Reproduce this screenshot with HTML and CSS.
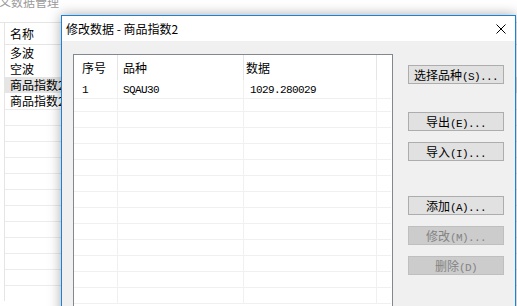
FILE: index.html
```html
<!doctype html>
<html lang="zh-CN">
  <head>
    <meta charset="UTF-8" />
    <title>修改数据 - 商品指数2</title>
    <link rel="stylesheet" href="styles.css">
  </head>
  <body>
    <div class="app">
      <div class="app-title"><span>义数据管理</span></div>
      <div class="app-list">
        <div class="app-head">名称</div>
        <div class="app-row">多波</div>
        <div class="app-row">空波</div>
        <div class="app-row selected">商品指数2</div>
        <div class="app-row">商品指数2</div>
        <div class="app-row empty"></div>
        <div class="app-row empty"></div>
        <div class="app-row empty"></div>
        <div class="app-row empty"></div>
        <div class="app-row empty"></div>
        <div class="app-row empty"></div>
        <div class="app-row empty"></div>
        <div class="app-row empty"></div>
        <div class="app-row empty"></div>
        <div class="app-row empty"></div>
        <div class="app-row empty"></div>
        <div class="app-row empty"></div>
      </div>
    </div>

    <div class="dialog">
      <div class="dialog-title">
        <span>修改数据 - 商品指数2</span>
        <svg class="close" width="10" height="10" viewBox="0 0 10 10">
          <path d="M0.5 0.5 L9.5 9.5 M9.5 0.5 L0.5 9.5" stroke="#000" stroke-width="1" fill="none" />
        </svg>
      </div>
      <div class="dialog-body">
        <div class="list">
          <div class="list-head">
            <div class="cell c1">序号</div>
            <div class="cell c2">品种</div>
            <div class="cell c3">数据</div>
            <div class="cell c4"></div>
          </div>
          <div class="list-row">
            <div class="cell c1"><span class="a">1</span></div>
            <div class="cell c2"><span class="a">SQAU30</span></div>
            <div class="cell c3 num"><span class="a">1029.280029</span></div>
            <div class="cell c4"></div>
          </div>
          <div class="list-row"><div class="cell c1"></div><div class="cell c2"></div><div class="cell c3"></div><div class="cell c4"></div></div>
          <div class="list-row"><div class="cell c1"></div><div class="cell c2"></div><div class="cell c3"></div><div class="cell c4"></div></div>
          <div class="list-row"><div class="cell c1"></div><div class="cell c2"></div><div class="cell c3"></div><div class="cell c4"></div></div>
          <div class="list-row"><div class="cell c1"></div><div class="cell c2"></div><div class="cell c3"></div><div class="cell c4"></div></div>
          <div class="list-row"><div class="cell c1"></div><div class="cell c2"></div><div class="cell c3"></div><div class="cell c4"></div></div>
          <div class="list-row"><div class="cell c1"></div><div class="cell c2"></div><div class="cell c3"></div><div class="cell c4"></div></div>
          <div class="list-row"><div class="cell c1"></div><div class="cell c2"></div><div class="cell c3"></div><div class="cell c4"></div></div>
          <div class="list-row"><div class="cell c1"></div><div class="cell c2"></div><div class="cell c3"></div><div class="cell c4"></div></div>
          <div class="list-row"><div class="cell c1"></div><div class="cell c2"></div><div class="cell c3"></div><div class="cell c4"></div></div>
          <div class="list-row"><div class="cell c1"></div><div class="cell c2"></div><div class="cell c3"></div><div class="cell c4"></div></div>
          <div class="list-row"><div class="cell c1"></div><div class="cell c2"></div><div class="cell c3"></div><div class="cell c4"></div></div>
          <div class="list-row"><div class="cell c1"></div><div class="cell c2"></div><div class="cell c3"></div><div class="cell c4"></div></div>
          <div class="list-row"><div class="cell c1"></div><div class="cell c2"></div><div class="cell c3"></div><div class="cell c4"></div></div>
        </div>
        <div class="actions">
          <button class="btn">选择品种<span class="a">(S)...</span></button>
          <button class="btn gap-lg">导出<span class="a">(E)...</span></button>
          <button class="btn">导入<span class="a">(I)...</span></button>
          <button class="btn gap-xl">添加<span class="a">(A)...</span></button>
          <button class="btn" disabled>修改<span class="a">(M)...</span></button>
          <button class="btn" disabled>删除<span class="a">(D)</span></button>
        </div>
      </div>
    </div>
  </body>
</html>
```

FILE: styles.css
```css
/* Reset */
* {
  box-sizing: border-box;
}

body {
  margin: 0;
  width: 517px;
  height: 306px;
  overflow: hidden;
  position: relative;
  background: #fff;
  font-family: "Noto Sans CJK SC", "Microsoft YaHei", sans-serif;
  font-size: 12px;
  color: #000;
}

.a {
  font-family: "Liberation Mono", monospace;
  font-size: 11px;
  letter-spacing: -0.6px;
}

/* Background window */
.app-title {
  height: 27px;
  color: #9a9a9a;
  line-height: 12px;
  border-bottom: 1px solid #e5e5e5;
}

.app-title span {
  display: block;
  margin-top: -4px;
  margin-left: -1px;
}

.app-list {
  border-left: 1px solid #e5e5e5;
  margin-left: 4px;
}

.app-head {
  height: 22px;
  line-height: 21px;
  padding-left: 5px;
  border-bottom: 1px solid #e5e5e5;
}

.app-row {
  height: 16px;
  line-height: 16px;
  padding-left: 5px;
}

.app-row.selected {
  background: #e5e5e5;
}

.app-row.empty {
  border-top: 1px solid #ececec;
}

/* Dialog window */
.dialog {
  position: absolute;
  left: 61px;
  top: 15px;
  width: 455px;
  height: 320px;
  background: #f0f0f0;
  border: 1px solid #1883d7;
  box-shadow: 0 0 12px rgba(0, 0, 0, 0.35);
}

.dialog-title {
  height: 25px;
  background: #fff;
  display: flex;
  align-items: center;
  justify-content: space-between;
  padding: 0 9px 0 4px;
}

.dialog-title span {
  line-height: 14px;
}

.dialog-body {
  display: flex;
  align-items: flex-start;
  padding: 13px 0 0 11px;
}

/* List view */
.list {
  width: 320px;
  height: 300px;
  background: #fff;
  border: 1px solid #828790;
  overflow: hidden;
}

.list-head,
.list-row {
  display: grid;
  grid-template-columns: 44px 126px 133px 15px;
}

.list-head {
  height: 25px;
}

.list-head .cell {
  line-height: 25px;
  border-right: 1px solid #e5e5e5;
}

.list-head .c4 {
  border-right: none;
}

.list-row {
  height: 16px;
}

.list-row .cell {
  line-height: 15px;
  border-right: 1px solid #f0f0f0;
  border-bottom: 1px solid #f0f0f0;
}

.list-row .c4 {
  border-right: none;
  margin-right: 1px;
}

.cell {
  white-space: nowrap;
}

.c1 {
  padding-left: 8px;
}

.c2 {
  padding-left: 5px;
}

.c3 {
  padding-left: 2px;
}

.c3.num {
  padding-left: 6px;
}

/* Buttons */
.actions {
  display: flex;
  flex-direction: column;
  margin: 11px 0 0 15px;
  width: 96px;
}

.btn {
  height: 19px;
  margin: 11px 0 0;
  padding: 0;
  background: #e1e1e1;
  border: 1px solid #adadad;
  font-family: inherit;
  font-size: 12px;
  line-height: 17px;
  color: #000;
}

.btn:first-child {
  margin-top: 0;
}

.btn.gap-lg {
  margin-top: 28px;
}

.btn.gap-xl {
  margin-top: 35px;
}

.btn:disabled {
  background: #cccccc;
  border-color: #bfbfbf;
  color: #838383;
}
```
